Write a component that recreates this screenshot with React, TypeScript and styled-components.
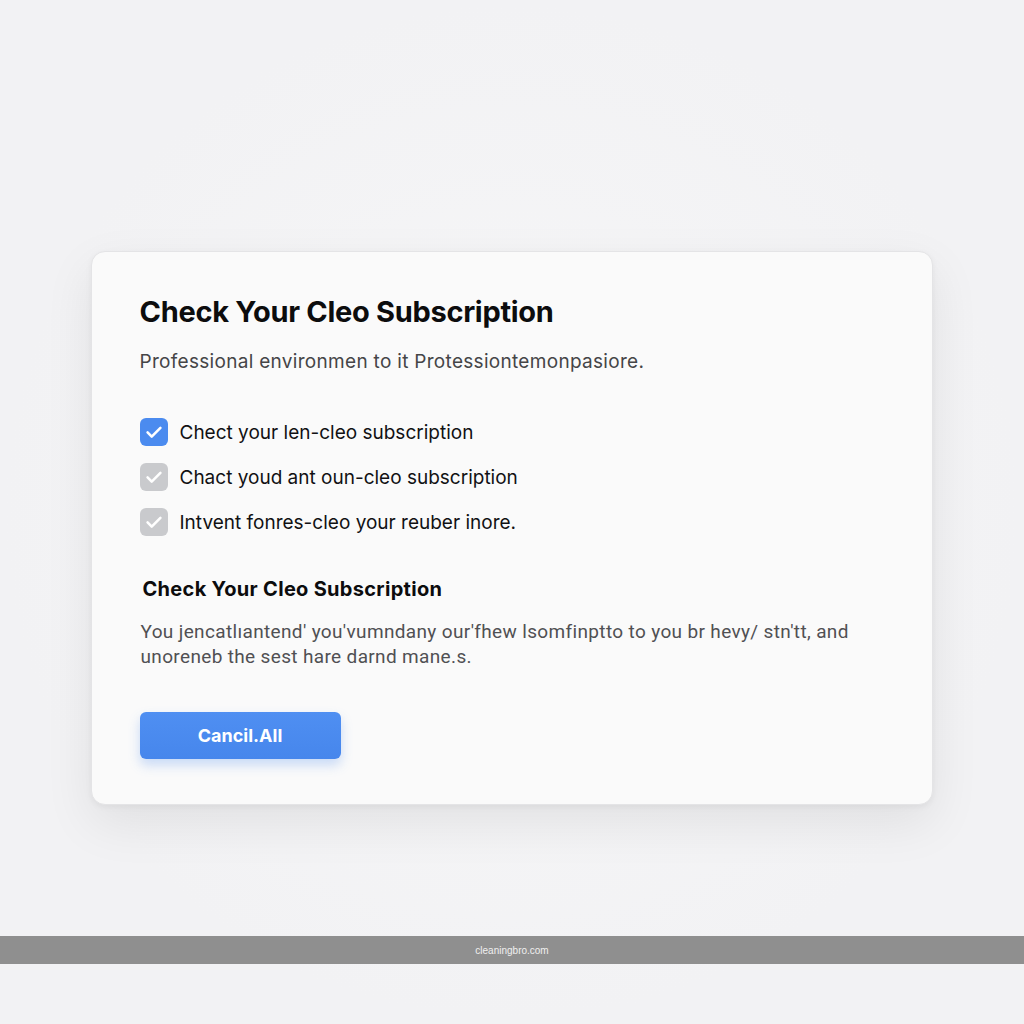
import React from 'react'
import styled, { createGlobalStyle } from 'styled-components'

const GlobalStyle = createGlobalStyle`
  html, body {
    margin: 0;
    padding: 0;
    background: #f3f3f5;
    font-family: Inter, 'Noto Sans', sans-serif;
    -webkit-font-smoothing: antialiased;
  }
`

const Page = styled.div`
  display: flex;
  flex-direction: column;
  align-items: center;
  height: 1024px;
  padding-top: 251px;
  box-sizing: border-box;
  background: radial-gradient(ellipse at 50% 50%, #f7f7f8 0%, #f2f2f4 70%);
`

const Card = styled.section`
  width: 842px;
  margin-right: 1px;
  box-sizing: border-box;
  padding: 43px 49px 45px 48px;
  background: #fafafa;
  border: 1px solid #e4e4e6;
  border-radius: 14px;
  box-shadow: 0 18px 50px rgba(0, 0, 0, 0.08), 0 2px 6px rgba(0, 0, 0, 0.05);
`

const Title = styled.h1`
  margin: 0;
  font-size: 29px;
  line-height: 34px;
  font-weight: 700;
  letter-spacing: -0.3px;
  color: #0c0c0d;
`

const Subtitle = styled.p`
  margin: 21px 0 0;
  font-size: 19px;
  line-height: 24px;
  letter-spacing: 0.3px;
  color: #454547;
`

const Checklist = styled.ul`
  list-style: none;
  margin: 44px 0 0;
  padding: 0;
  display: flex;
  flex-direction: column;
  gap: 17px;
`

const CheckRow = styled.li`
  display: flex;
  align-items: center;
  gap: 12px;
  height: 28px;
  font-size: 19px;
  color: #111113;
`

const Box = styled.span<{ checked: boolean }>`
  display: flex;
  align-items: center;
  justify-content: center;
  width: 28px;
  height: 28px;
  border-radius: 6px;
  background: ${({ checked }) => (checked ? '#4b8bef' : '#c9cacd')};
  flex-shrink: 0;
`

const SectionTitle = styled.h2`
  margin: 40px 0 0 3px;
  font-size: 20px;
  line-height: 26px;
  font-weight: 700;
  letter-spacing: 0.3px;
  color: #0c0c0d;
`

const Body = styled.p`
  margin: 17px 0 0 1px;
  max-width: 730px;
  font-family: Roboto, 'Liberation Sans', sans-serif;
  font-size: 19px;
  line-height: 25px;
  letter-spacing: 0.35px;
  color: #505053;
`

const CancelButton = styled.button`
  display: block;
  margin-top: 43px;
  width: 201px;
  height: 47px;
  border: none;
  border-radius: 6px;
  background: linear-gradient(180deg, #4f8ff2 0%, #4686ec 100%);
  color: #fff;
  font-family: Inter, sans-serif;
  font-size: 18px;
  font-weight: 700;
  box-shadow: 0 6px 12px rgba(70, 134, 236, 0.28);
  cursor: pointer;
`

const Footer = styled.footer`
  margin-top: auto;
  margin-bottom: 60px;
  align-self: stretch;
  height: 28px;
  display: flex;
  align-items: center;
  justify-content: center;
  background: #8f8f8f;
  color: #f0f0f0;
  font-family: 'Liberation Sans', Arial, sans-serif;
  font-size: 10px;
`

function Check() {
  return (
    <svg width="22" height="22" viewBox="0 0 24 24" fill="none">
      <path d="M5 12.5l4.5 4.5L19 7.5" stroke="#fff" strokeWidth="2.8" strokeLinecap="round" strokeLinejoin="round" />
    </svg>
  )
}

const items = [
  { label: 'Chect your len-cleo subscription', checked: true },
  { label: 'Chact youd ant oun-cleo subscription', checked: false },
  { label: 'Intvent fonres-cleo your reuber inore.', checked: false },
]

export default function App() {
  return (
    <>
      <GlobalStyle />
      <Page>
        <Card>
          <Title>Check Your Cleo Subscription</Title>
          <Subtitle>Professional environmen to it Protessiontemonpasiore.</Subtitle>
          <Checklist>
            {items.map(item => (
              <CheckRow key={item.label}>
                <Box checked={item.checked}>
                  <Check />
                </Box>
                {item.label}
              </CheckRow>
            ))}
          </Checklist>
          <SectionTitle>Check Your Cleo Subscription</SectionTitle>
          <Body>
            You jencatlıantend' you'vumndany our'fhew lsomfinptto to you br hevy/ stn'tt, and unoreneb the sest hare darnd mane.s.
          </Body>
          <CancelButton>Cancil.All</CancelButton>
        </Card>
        <Footer>cleaningbro.com</Footer>
      </Page>
    </>
  )
}
